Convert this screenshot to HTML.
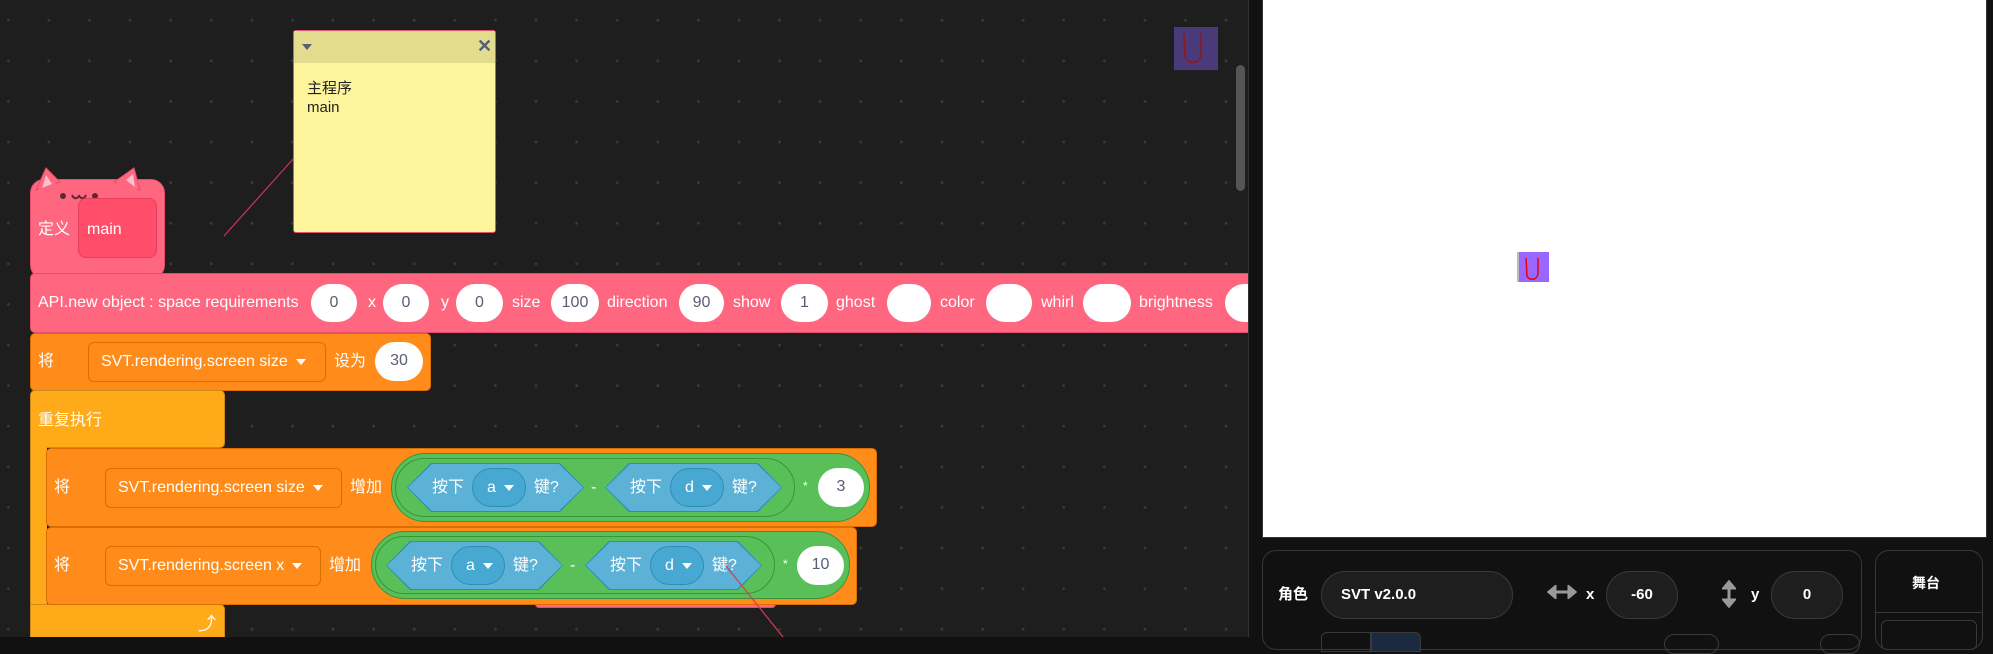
<!DOCTYPE html>
<html><head><meta charset="utf-8"><style>
*{box-sizing:border-box;margin:0;padding:0}
body{width:1993px;height:637px;overflow:hidden;background:#111;font-family:"Liberation Sans","Noto Sans CJK SC",sans-serif;position:relative}
.a{position:absolute}
#ws{left:0;top:0;width:1249px;height:637px;background-color:#1e1e1e;background-image:radial-gradient(circle,#3a3a3a 1.2px,transparent 1.6px);background-size:40.6px 40.6px;background-position:-12px 0px;border-right:1px solid #333;overflow:hidden}
.t{position:absolute;color:#fff;font-size:16px;line-height:20px;white-space:nowrap}
.ov{position:absolute;background:#fff;border-radius:20px;color:#575e75;font-size:16px;text-align:center;line-height:38px;height:38px}
.dd{position:absolute;background:#ff8c1a;border:1px solid #db6e00;border-radius:6px;color:#fff;font-size:16px;line-height:38px;height:40px;padding-left:12px}
.tri{display:inline-block;width:0;height:0;border-left:5px solid transparent;border-right:5px solid transparent;border-top:6px solid #fff;vertical-align:middle;margin-left:8px}
.hex{position:absolute;height:49px;background:#2f8cb5;clip-path:polygon(24px 0,calc(100% - 24px) 0,100% 50%,calc(100% - 24px) 100%,24px 100%,0 50%)}
.hex>div{position:absolute;inset:1px;background:#5cb1d6;clip-path:polygon(24px 0,calc(100% - 24px) 0,100% 50%,calc(100% - 24px) 100%,24px 100%,0 50%)}
.kd{position:absolute;top:5px;height:39px;width:54px;background:#47a8d1;border:1px solid #2e8eb8;border-radius:20px;color:#fff;font-size:16px;line-height:37px;padding-left:14px}
.inp{position:absolute;border:1px solid #3a3a3a;background:#1e1e1e;border-radius:24px;color:#fff;font-weight:bold;font-size:15px;text-align:center;line-height:46px;height:48px}
</style></head><body>
<div id="ws" class="a">
<svg class="a" style="left:0;top:0" width="1249" height="637"><line x1="224" y1="236" x2="294" y2="158" stroke="#c9345a" stroke-width="1.2"/></svg>
<div class="a" style="left:293px;top:30px;width:203px;height:203px;background:#fef49c;border:1px solid #e0546e;border-radius:3px"></div>
<div class="a" style="left:294px;top:31px;width:201px;height:32px;background:#e3dc8f"></div>
<div class="a" style="left:302px;top:44px;width:0;height:0;border-left:5px solid transparent;border-right:5px solid transparent;border-top:6px solid #575e75"></div>
<div class="t" style="left:477px;top:36px;color:#575e75;font-weight:bold;font-size:18px">✕</div>
<div class="t" style="left:307px;top:79px;color:#222;font-size:15px;line-height:19px">主程序<br>main</div>
<!-- hat -->
<div class="a" style="left:30px;top:179px;width:135px;height:100px;background:#ff6680;border:1px solid #e64d6a;border-radius:14px"></div>
<svg class="a" style="left:30px;top:160px" width="140" height="40"><path d="M6 30 L16 8 L30 22Z" fill="#ff6680" stroke="#e64d6a" stroke-width="1"/><path d="M84 22 L104 8 L110 30Z" fill="#ff6680" stroke="#e64d6a" stroke-width="1"/><path d="M9 30 L16 12 L26 24 L12 32Z" fill="#ff6680"/><path d="M86 24 L103 12 L108 32Z" fill="#ff6680"/><path d="M12 28 L16 15 L22 24Z" fill="#ffc0cc"/><path d="M96 20 L103 14 L105 27Z" fill="#ffc0cc"/></svg>
<div class="a" style="left:60px;top:193px;width:6px;height:6px;border-radius:50%;background:#5a2a35"></div>
<div class="a" style="left:92px;top:193px;width:6px;height:6px;border-radius:50%;background:#5a2a35"></div>
<svg class="a" style="left:71px;top:193px" width="16" height="10"><path d="M1 2 Q4 8 8 3 Q12 8 15 2" fill="none" stroke="#5a2a35" stroke-width="2"/></svg>
<div class="a" style="left:78px;top:198px;width:79px;height:60px;background:#ff4d6a;border:1px solid #e63d5c;border-radius:8px"></div>
<div class="t" style="left:38px;top:220px">定义</div>
<div class="t" style="left:87px;top:220px">main</div>
<!-- API -->
<div class="a" style="left:30px;top:273px;width:1240px;height:60px;background:#ff6680;border:1px solid #e64d6a;border-radius:5px"></div>
<div class="t" style="left:38px;top:293px">API.new object : space requirements</div>
<div class="ov" style="left:311px;top:284px;width:46px">0</div><div class="t" style="left:368px;top:293px">x</div>
<div class="ov" style="left:383px;top:284px;width:46px">0</div><div class="t" style="left:441px;top:293px">y</div>
<div class="ov" style="left:456px;top:284px;width:47px">0</div><div class="t" style="left:512px;top:293px">size</div>
<div class="ov" style="left:551px;top:284px;width:48px">100</div><div class="t" style="left:607px;top:293px">direction</div>
<div class="ov" style="left:679px;top:284px;width:45px">90</div><div class="t" style="left:733px;top:293px">show</div>
<div class="ov" style="left:781px;top:284px;width:47px">1</div><div class="t" style="left:836px;top:293px">ghost</div>
<div class="ov" style="left:887px;top:284px;width:44px"></div><div class="t" style="left:940px;top:293px">color</div>
<div class="ov" style="left:986px;top:284px;width:46px"></div><div class="t" style="left:1041px;top:293px">whirl</div>
<div class="ov" style="left:1083px;top:284px;width:48px"></div><div class="t" style="left:1139px;top:293px">brightness</div>
<div class="ov" style="left:1225px;top:284px;width:48px"></div>
<!-- set -->
<div class="a" style="left:30px;top:333px;width:401px;height:58px;background:#ff8c1a;border:1px solid #db6e00;border-radius:5px"></div>
<div class="t" style="left:38px;top:352px">将</div>
<div class="dd" style="left:88px;top:342px;width:238px">SVT.rendering.screen size<span class="tri"></span></div>
<div class="t" style="left:334px;top:352px">设为</div>
<div class="ov" style="left:375px;top:342px;width:48px;height:39px">30</div>
<!-- repeat -->
<div class="a" style="left:30px;top:390px;width:195px;height:58px;background:#ffab19;border:1px solid #cf8b17;border-radius:5px 5px 5px 0"></div>
<div class="a" style="left:30px;top:440px;width:17px;height:200px;background:#ffab19;border-left:1px solid #cf8b17"></div>
<div class="a" style="left:30px;top:604px;width:195px;height:40px;background:#ffab19;border:1px solid #cf8b17;border-radius:0 5px 0 0"></div>
<div class="t" style="left:38px;top:411px">重复执行</div>
<div class="t" style="left:198px;top:614px;font-size:18px">⤴</div>
<div class="a" style="left:535px;top:598px;width:241px;height:10px;background:#ff6680;border:1px solid #e64d6a;border-radius:4px"></div>
<!-- block1 -->
<div class="a" style="left:46px;top:448px;width:831px;height:79px;background:#ff8c1a;border:1px solid #db6e00;border-radius:5px"></div>
<div class="t" style="left:54px;top:478px">将</div>
<div class="dd" style="left:105px;top:468px;width:237px">SVT.rendering.screen size<span class="tri"></span></div>
<div class="t" style="left:350px;top:478px">增加</div>
<div class="a" style="left:391px;top:453px;width:479px;height:69px;background:#59c059;border:1px solid #389438;border-radius:35px"></div>
<div class="a" style="left:395px;top:458px;width:400px;height:59px;border:1px solid #389438;border-radius:30px"></div>
<div class="hex" style="left:407px;top:463px;width:177px"><div></div></div>
<div class="t" style="left:432px;top:478px">按下</div><div class="kd" style="left:472px;top:468px">a<span class="tri"></span></div><div class="t" style="left:534px;top:478px">键?</div>
<div class="t" style="left:591px;top:478px">-</div>
<div class="hex" style="left:605px;top:463px;width:177px"><div></div></div>
<div class="t" style="left:630px;top:478px">按下</div><div class="kd" style="left:670px;top:468px">d<span class="tri"></span></div><div class="t" style="left:732px;top:478px">键?</div>
<div class="t" style="left:803px;top:476px;font-size:12px">*</div>
<div class="ov" style="left:818px;top:468px;width:46px;height:39px">3</div>
<!-- block2 -->
<div class="a" style="left:46px;top:527px;width:811px;height:78px;background:#ff8c1a;border:1px solid #db6e00;border-radius:5px"></div>
<div class="t" style="left:54px;top:556px">将</div>
<div class="dd" style="left:105px;top:546px;width:216px">SVT.rendering.screen x<span class="tri"></span></div>
<div class="t" style="left:329px;top:556px">增加</div>
<div class="a" style="left:371px;top:531px;width:479px;height:68px;background:#59c059;border:1px solid #389438;border-radius:35px"></div>
<div class="a" style="left:375px;top:536px;width:400px;height:58px;border:1px solid #389438;border-radius:30px"></div>
<div class="hex" style="left:386px;top:541px;width:177px"><div></div></div>
<div class="t" style="left:411px;top:556px">按下</div><div class="kd" style="left:451px;top:546px">a<span class="tri"></span></div><div class="t" style="left:513px;top:556px">键?</div>
<div class="t" style="left:570px;top:556px">-</div>
<div class="hex" style="left:585px;top:541px;width:177px"><div></div></div>
<div class="t" style="left:610px;top:556px">按下</div><div class="kd" style="left:650px;top:546px">d<span class="tri"></span></div><div class="t" style="left:712px;top:556px">键?</div>
<svg class="a" style="left:720px;top:560px" width="70" height="80"><line x1="6" y1="6" x2="63" y2="77" stroke="#d43a5a" stroke-width="1.2"/></svg>
<div class="t" style="left:783px;top:554px;font-size:12px">*</div>
<div class="ov" style="left:797px;top:546px;width:47px;height:39px">10</div>
<div class="a" style="left:1174px;top:27px;width:44px;height:43px;background:#4a3a7a"></div>
<svg class="a" style="left:1174px;top:27px" width="44" height="43"><path d="M10 6 L11 30 Q14 37 22 35 Q27 33 27 27 L27 6" fill="none" stroke="#8b1a1a" stroke-width="1.5"/></svg>
<div class="a" style="left:1236px;top:65px;width:9px;height:126px;background:#555;border-radius:5px"></div>
</div>
<div class="a" style="left:1262px;top:0;width:725px;height:538px;background:#fff;border:1px solid #333;border-top:none"></div>
<div class="a" style="left:1517px;top:252px;width:32px;height:30px;background:#9966ff;border-left:2px solid #bbb"></div>
<svg class="a" style="left:1517px;top:252px" width="32" height="30"><path d="M9 6 L10 24 Q12 28 17 27 Q20 26 21 22 L21 6" fill="none" stroke="#e00" stroke-width="1.5"/></svg>
<div class="a" style="left:1262px;top:550px;width:600px;height:100px;border:1px solid #383838;border-radius:14px;background:#111"></div>
<div class="t" style="left:1278px;top:585px;font-weight:bold;font-size:15px">角色</div>
<div class="inp" style="left:1321px;top:571px;width:192px;text-align:left;padding-left:19px">SVT v2.0.0</div>
<svg class="a" style="left:1547px;top:585px" width="30" height="14"><path d="M2 7 H28 M2 7 L8 2 V12 Z M28 7 L22 2 V12 Z" stroke="#999" stroke-width="3" fill="#999"/></svg>
<div class="t" style="left:1586px;top:585px;font-weight:bold;font-size:15px">x</div>
<div class="inp" style="left:1606px;top:571px;width:72px">-60</div>
<svg class="a" style="left:1722px;top:580px" width="14" height="28"><path d="M7 2 V26 M7 2 L2 8 H12 Z M7 26 L2 20 H12 Z" stroke="#999" stroke-width="3" fill="#999"/></svg>
<div class="t" style="left:1751px;top:585px;font-weight:bold;font-size:15px">y</div>
<div class="inp" style="left:1771px;top:571px;width:72px">0</div>
<div class="a" style="left:1321px;top:632px;width:50px;height:20px;border:1px solid #3a3a3a;border-radius:6px 0 0 0"></div>
<div class="a" style="left:1371px;top:632px;width:50px;height:20px;background:#1c2a3f;border:1px solid #3a3a3a;border-radius:0 6px 0 0"></div>
<div class="a" style="left:1664px;top:634px;width:55px;height:20px;border:1px solid #3a3a3a;border-radius:12px"></div>
<div class="a" style="left:1820px;top:634px;width:40px;height:20px;border:1px solid #3a3a3a;border-radius:12px"></div>
<div class="a" style="left:1875px;top:550px;width:108px;height:100px;border:1px solid #383838;border-radius:14px"></div>
<div class="a" style="left:1875px;top:612px;width:108px;height:1px;background:#383838"></div>
<div class="t" style="left:1912px;top:573px;font-weight:bold;font-size:14px">舞台</div>
<div class="a" style="left:1881px;top:620px;width:96px;height:30px;border:1px solid #383838;border-radius:6px"></div>
</body></html>
